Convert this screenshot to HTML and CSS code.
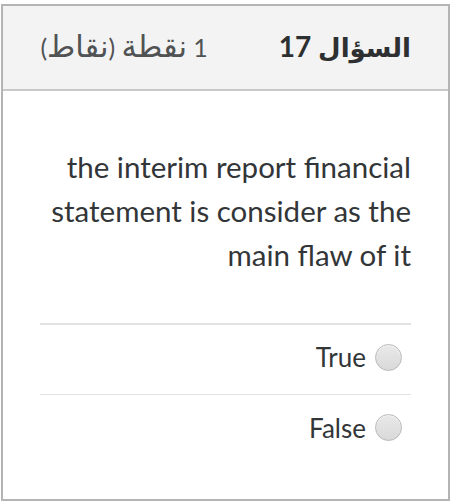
FILE: index.html
```html
<!DOCTYPE html>
<html lang="ar">
<head>
<meta charset="utf-8">
<link rel="stylesheet" href="styles.css">
</head>
<body>
<div class="card">
  <div class="header">
    <span class="title"><span class="ar">السؤال</span> 17</span>
    <span class="points">1 <span class="ar">نقطة</span> (<span class="ar">نقاط</span>)</span>
  </div>
  <div class="body">
    <p class="question">the interim report financial statement is consider as the main flaw of it</p>
    <div class="answers">
      <label class="answer"><span class="radio"></span><span class="label">True</span></label>
      <label class="answer"><span class="radio"></span><span class="label">False</span></label>
    </div>
  </div>
</div>
</body>
</html>
```
FILE: styles.css
```css
html, body {
  margin: 0;
  padding: 0;
  background: #ffffff;
}
body {
  font-family: Lato, "DejaVu Sans", sans-serif;
  color: #333638;
}
.card {
  box-sizing: border-box;
  margin: 4px 3px 0 1px;
  height: 497px;
  border: 2px solid #b4b4b4;
  display: flex;
  flex-direction: column;
}
.header {
  box-sizing: border-box;
  height: 85px;
  background: #f3f3f3;
  border-bottom: 2px solid #c9c9c9;
  direction: rtl;
  display: flex;
  align-items: center;
  gap: 71px;
  padding: 0 37px 4px 0;
}
.title {
  font-size: 28px;
  font-weight: 700;
  color: #2d2f31;
}
.title .ar {
  font-size: 26px;
}
.points {
  font-size: 25px;
  color: #505254;
}
.points .ar {
  font-size: 30.5px;
}
.body {
  padding: 54px 37px 0 37px;
}
.question {
  margin: 0;
  font-size: 29.5px;
  line-height: 44px;
  text-align: right;
  color: #333638;
}
.answers {
  margin-top: 46px;
  display: flex;
  flex-direction: column;
}
.answer {
  box-sizing: border-box;
  direction: rtl;
  display: flex;
  align-items: center;
  gap: 9px;
  height: 71px;
  border-top: 2px solid #e2e2e2;
  padding: 0 9px 5px 0;
}
.answer + .answer {
  border-top-width: 1px;
}
.label {
  font-size: 26px;
  color: #333638;
}
.radio {
  box-sizing: border-box;
  width: 27px;
  height: 27px;
  border-radius: 50%;
  border: 1px solid #b9b9b9;
  background: linear-gradient(#e9e9e9, #d9d9d9);
  box-shadow: inset 0 1px 1px rgba(255,255,255,0.6);
}
```
